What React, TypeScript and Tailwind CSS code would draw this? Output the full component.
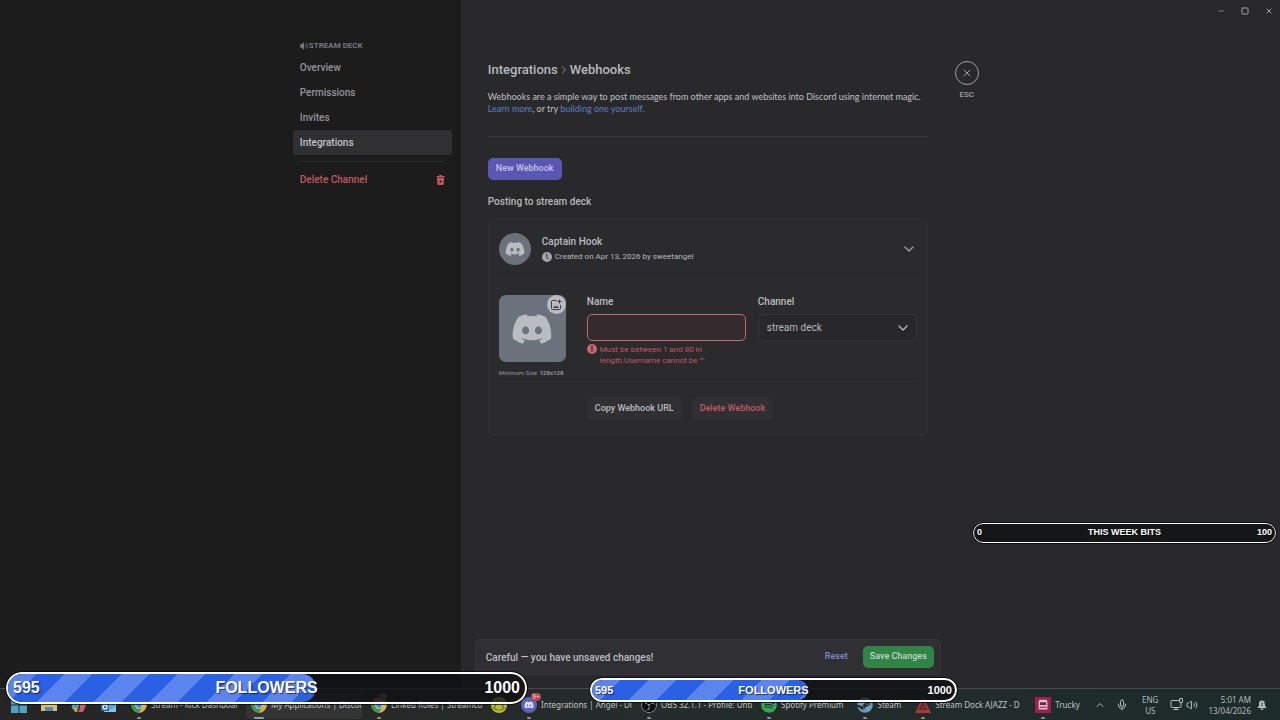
import type { ReactNode } from 'react'
import { ChevronDown, ChevronRight, ChevronUp, Mic, Minus, Monitor, Square, Volume2, X } from 'lucide-react'
import { FaDiscord, FaSnapchat, FaSpotify, FaSteam } from 'react-icons/fa6'
import { SiObsstudio } from 'react-icons/si'
import clsx from 'clsx'

const navItems = ['Overview', 'Permissions', 'Invites', 'Integrations']

function SpeakerIcon() {
    return (
        <svg viewBox="0 0 24 24" className="h-2 w-2" fill="currentColor" aria-hidden="true">
            <path d="M12 2.5v19c0 .8-.9 1.200-1.500.7L4.500 17H2a1.500 1.500 0 0 1-1.500-1.500v-7A1.500 1.500 0 0 1 2 7h2.500l6-5.200c.6-.5 1.500-.1 1.500.7z" />
            <path d="M15 7.500c3 1.500 3 7.500 0 9M18 3c6 3.500 6 14.500 0 18" fill="none" stroke="currentColor" strokeWidth="2.500" />
        </svg>
    )
}

function TrashIcon() {
    return (
        <svg viewBox="0 0 24 28" className="h-[10px] w-[9px]" fill="currentColor" aria-hidden="true">
            <path d="M8 0h8v3h7a1 1 0 0 1 1 1v2H0V4a1 1 0 0 1 1-1h7z" />
            <path
                fillRule="evenodd"
                d="M2 8h20l-1.200 17a3 3 0 0 1-3 3H6.200a3 3 0 0 1-3-3zM12 13l-1 3-3 2 3 2 1 3 1-3 3-2-3-2z"
            />
        </svg>
    )
}

function ClockIcon() {
    return (
        <svg viewBox="0 0 20 20" className="h-[10px] w-[10px] shrink-0" aria-hidden="true">
            <circle cx="10" cy="10" r="10" fill="#a6a6aa" />
            <path d="M9.500 4v6.500l3.500 3.500" fill="none" stroke="#2b2b2e" strokeWidth="2" strokeLinecap="round" />
        </svg>
    )
}

function ErrorIcon() {
    return (
        <svg viewBox="0 0 20 20" className="h-[10px] w-[10px] shrink-0" aria-hidden="true">
            <circle cx="10" cy="10" r="10" fill="#c9656e" />
            <path d="M10 4.500v7" stroke="#2b2b2e" strokeWidth="2.500" strokeLinecap="round" />
            <circle cx="10" cy="15" r="1.500" fill="#2b2b2e" />
        </svg>
    )
}

function UploadIcon() {
    return (
        <svg viewBox="0 0 24 24" className="h-3 w-3" fill="none" stroke="#3c3d42" strokeWidth="2" aria-hidden="true">
            <path d="M13 3H5a2 2 0 0 0-2 2v14a2 2 0 0 0 2 2h14a2 2 0 0 0 2-2v-7M19 1v8M15 5h8" />
            <path d="M6 18l3.500-5 2.500 3 2-2.500 4 4.500z" fill="#3c3d42" stroke="none" />
        </svg>
    )
}

function ChromeIcon() {
    return (
        <svg viewBox="0 0 48 48" className="h-4 w-4" aria-hidden="true">
            <circle cx="24" cy="24" r="23" fill="#c94f45" />
            <path d="M4.100 12.500A23 23 0 0 0 24 47l10-17.500-10-5.500z" fill="#3c9a56" />
            <path d="M24 47a23 23 0 0 0 19.900-34.500H24L34 30z" fill="#d9b23c" />
            <circle cx="24" cy="24" r="11" fill="#d5d8dc" />
            <circle cx="24" cy="24" r="8.500" fill="#4a84d0" />
        </svg>
    )
}

function WindowsIcon() {
    return (
        <svg viewBox="0 0 16 16" className="h-4 w-4" fill="#4fa3c4" aria-hidden="true">
            <path d="M0 0h7.500v7.500H0zM8.500 0H16v7.500H8.500zM0 8.500h7.500V16H0zM8.500 8.500H16V16H8.500z" />
        </svg>
    )
}

function FolderIcon() {
    return (
        <svg viewBox="0 0 16 16" className="h-4 w-4" aria-hidden="true">
            <path d="M0 2h6l2 2h8v10H0z" fill="#d0a545" />
            <path d="M0 6h16v8H0z" fill="#d9bd62" />
            <path d="M4 10h8v4H4z" fill="#4889b8" />
        </svg>
    )
}

function CopilotIcon() {
    return (
        <svg viewBox="0 0 16 16" className="h-4 w-4" aria-hidden="true">
            <path d="M5 1h5l-3 11H2Q0 12 1 8l2-5q.5-2 2-2z" fill="#4c9fb3" />
            <path d="M10 1q1.500 0 2 3h2q2 0 1 4l-2 5q-.5 2-2 2H6q2 0 2.500-3z" fill="#c9606c" />
            <path d="M2 11h5l-1 4H5q-2 0-3-4z" fill="#d3a03f" />
        </svg>
    )
}

function OutlookIcon() {
    return (
        <svg viewBox="0 0 16 16" className="h-4 w-4" aria-hidden="true">
            <path d="M3 1h12v14H3z" fill="#5fa5d6" />
            <path d="M3 9l6 4 6-4v6H3z" fill="#86bfe2" />
            <path d="M0 6h8v8H0z" fill="#2b6ba8" />
            <circle cx="4" cy="10" r="2" fill="none" stroke="#d9e4ec" strokeWidth="1.500" />
        </svg>
    )
}

function StreamDockIcon() {
    return (
        <svg viewBox="0 0 18 18" className="h-4 w-4" aria-hidden="true">
            <path d="M9 0l9 18H0z" fill="#b2343b" />
            <path d="M9 6l4 8H5zM9 9v5" fill="none" stroke="#4c2a2e" strokeWidth="1.500" />
        </svg>
    )
}

function TruckyIcon() {
    return (
        <svg viewBox="0 0 18 18" className="h-4 w-4" aria-hidden="true">
            <path d="M0 0h18v18H0z" fill="#a01f50" />
            <path d="M5 3h8l1 3v8H4V6z" fill="#d9c3cd" />
            <path d="M5.500 6h7v3h-7zM5 11h8v1H5z" fill="#7b2244" />
        </svg>
    )
}

function NetworkIcon() {
    return (
        <div className="relative">
            <Monitor className="h-3 w-3" strokeWidth={2} />
            <span className="absolute -right-px -top-px h-[5px] w-1 rounded-[1px] border border-[#b4bcbc] bg-[#202b2b]" />
        </div>
    )
}

function BellIcon() {
    return (
        <svg viewBox="0 0 20 20" className="h-[10px] w-[10px]" aria-hidden="true">
            <path d="M10 1a6 6 0 0 0-6 6v5l-3 3v1h18v-1l-3-3V7a6 6 0 0 0-6-6zM7 17a3 3 0 0 0 6 0z" fill="#b9c0c0" />
            <path d="M8 6h4l-4 5h4M14 2h4l-4 4h4" fill="none" stroke="#3a4545" strokeWidth="1.500" />
        </svg>
    )
}

interface TaskbarAppProps {
    icon: ReactNode
    label?: string
    title: string
    wide?: boolean
    active?: boolean
    running?: boolean
}

function TaskbarApp({ icon, label, title, wide, active, running }: TaskbarAppProps) {
    return (
        <button
            aria-label={title}
            className={clsx(
                'relative flex h-7 shrink-0 items-center gap-1 rounded px-[5px]',
                wide && 'w-[116px]',
                active && 'bg-[#343434]'
            )}
        >
            <span className="shrink-0">{icon}</span>
            {label && <span className="whitespace-nowrap text-[#c2c4c4]">{label}</span>}
            {running && (
                <span
                    className={clsx(
                        'absolute bottom-0 h-[2px] rounded-full',
                        active ? 'left-2 w-[10px] bg-[#7fa3b8]' : 'left-[11px] w-1 bg-[#8b9090]'
                    )}
                />
            )}
        </button>
    )
}

function Taskbar() {
    return (
        <footer className="flex h-8 items-center border-t border-[#454a4a] bg-linear-to-r from-[#262424] via-[#252c2b] to-[#1d2b2b] pl-[6px] pr-[13px] font-['Noto_Sans',sans-serif] text-[8px] leading-[11px]">
            <div className="flex min-w-0 flex-1 items-center gap-1">
                <TaskbarApp title="Start" icon={<WindowsIcon />} />
                <TaskbarApp title="File Explorer" icon={<FolderIcon />} />
                <TaskbarApp title="Copilot" icon={<CopilotIcon />} />
                <TaskbarApp title="Outlook" icon={<OutlookIcon />} />
                <TaskbarApp title="Kick" icon={<ChromeIcon />} label="Stream - Kick Dashboar" wide running />
                <TaskbarApp title="Discord developers" icon={<ChromeIcon />} label="My Applications | Discor" wide active running />
                <TaskbarApp
                    title="Linked roles"
                    icon={
                        <span className="relative block">
                            <ChromeIcon />
                            <span className="absolute -top-1 right-0 h-2 w-2 rounded-full bg-[#6b645c]" />
                        </span>
                    }
                    label="Linked Roles | Streamco"
                    wide
                    running
                />
                <TaskbarApp
                    title="Snapchat"
                    icon={
                        <span className="flex h-4 w-4 items-center justify-center rounded-full bg-[#b9bc3a]">
                            <FaSnapchat className="h-3 w-3 text-[#3a3b20]" />
                        </span>
                    }
                />
                <TaskbarApp
                    title="Discord"
                    icon={
                        <span className="relative flex h-4 w-4 items-center justify-center rounded-full bg-[#5a62bd]">
                            <FaDiscord className="h-[10px] w-[10px] text-[#dcdef0]" />
                            <span className="absolute -right-1 -top-1 rounded-full bg-[#b8434c] px-px text-[7px] leading-2 text-[#e6d5d6]">
                                9+
                            </span>
                        </span>
                    }
                    label="Integrations | Angel - Di"
                    wide
                    running
                />
                <TaskbarApp
                    title="OBS Studio"
                    icon={<SiObsstudio className="h-4 w-4 rounded-full bg-[#0f1011] text-[#b9bcbc]" />}
                    label="OBS 32.1.1 - Profile: Unti"
                    wide
                    running
                />
                <TaskbarApp title="Spotify" icon={<FaSpotify className="h-4 w-4 text-[#35a85a]" />} label="Spotify Premium" running />
                <TaskbarApp title="Steam" icon={<FaSteam className="h-4 w-4 text-[#6f9dbc]" />} label="Steam" running />
                <TaskbarApp title="Stream Dock" icon={<StreamDockIcon />} label="Stream Dock AJAZZ - D" wide running />
                <TaskbarApp title="Trucky" icon={<TruckyIcon />} label="Trucky" running />
            </div>
            <div className="flex shrink-0 items-center text-[#b4bcbc]">
                <ChevronUp className="h-3 w-3" />
                <Mic className="ml-[10px] h-3 w-3" />
                <div className="ml-[14px] text-center">
                    ENG
                    <br />
                    US
                </div>
                <div className="ml-3 flex items-center gap-1">
                    <NetworkIcon />
                    <Volume2 className="h-3 w-3" />
                </div>
                <div className="ml-[10px] text-right">
                    5:01 AM
                    <br />
                    13/04/2026
                </div>
                <div className="ml-[6px]">
                    <BellIcon />
                </div>
            </div>
        </footer>
    )
}

interface GoalBarProps {
    label: string
    value: number
    goal: number
    size: 'sm' | 'md' | 'lg'
    className: string
}

function GoalBar({ label, value, goal, size, className }: GoalBarProps) {
    return (
        <div
            className={clsx(
                "absolute overflow-hidden rounded-full border-white bg-[#0e0f10]/75 font-['Liberation_Sans',sans-serif] font-bold text-white outline outline-black/70",
                size === 'lg' && 'h-8 border-2 text-[16px]',
                size === 'md' && 'h-6 border-2 text-[11px]',
                size === 'sm' && 'h-5 border text-[9px]',
                className
            )}
        >
            <div
                className="h-full rounded-full bg-[repeating-linear-gradient(135deg,#5b84ee_0px,#5b84ee_20px,#2a60e4_20px,#2a60e4_40px)]"
                style={{ width: `${(value / goal) * 100}%` }}
            />
            <div
                className={clsx(
                    'absolute inset-0 grid grid-cols-[1fr_auto_1fr] items-center text-shadow-[1px_1px_1px_rgb(0_0_0/0.6)]',
                    size === 'lg' ? 'px-[5px]' : 'px-[3px]'
                )}
            >
                <span>{value}</span>
                <span>{label}</span>
                <span className="text-right">{goal}</span>
            </div>
        </div>
    )
}

function Sidebar() {
    return (
        <aside className="flex w-[36%] shrink-0 justify-end bg-[#1c1c1c] pr-[9px] pt-10 text-[10px] text-[#94949a]">
            <nav className="w-[159px]">
                <h2 className="mb-1 flex h-[11px] items-center gap-px px-[7px] text-[8px] font-bold text-[#77777c]">
                    <SpeakerIcon />
                    STREAM DECK
                </h2>
                {navItems.map((item) => (
                    <a
                        key={item}
                        href="#"
                        className={clsx(
                            'flex h-[25px] items-center rounded-[3px] px-[7px] font-medium',
                            item === 'Integrations' && 'bg-[#303033] text-[#c4c4c8]'
                        )}
                    >
                        {item}
                    </a>
                ))}
                <hr className="mx-[7px] mb-[5px] mt-[6px] border-[#29292b]" />
                <button className="flex h-[25px] w-full items-center justify-between px-[7px] font-medium text-[#c25762]">
                    Delete Channel
                    <TrashIcon />
                </button>
            </nav>
        </aside>
    )
}

function WebhookCard() {
    return (
        <section className="mt-[9px] rounded-[5px] border border-[#323236] bg-[#2b2b2e] px-[10px] pb-[14px] pt-[13px]">
            <div className="flex items-center">
                <span className="flex h-8 w-8 items-center justify-center rounded-full bg-[#6c727c]">
                    <FaDiscord className="h-5 w-5 text-[#b9bcc1]" />
                </span>
                <div className="ml-[11px] flex-1">
                    <h3 className="text-[10px] font-medium leading-4 text-[#bcbcc0]">Captain Hook</h3>
                    <p className="flex items-center gap-[3px] text-[8px] leading-[14px] text-[#b8b8bc]">
                        <ClockIcon />
                        Created on Apr 13, 2026 by sweetangel
                    </p>
                </div>
                <button aria-label="Collapse webhook">
                    <ChevronDown className="h-4 w-4 text-[#9c9ca1]" />
                </button>
            </div>

            <hr className="mb-4 mt-[13px] border-[#2f2f32]" />

            <div className="flex">
                <div className="w-[67px] shrink-0">
                    <button
                        aria-label="Change avatar"
                        className="relative flex h-[67px] w-full items-center justify-center rounded-[7px] bg-[#6c727c]"
                    >
                        <FaDiscord className="h-[42px] w-[42px] text-[#b9bcc1]" />
                        <span className="absolute right-0 top-0 flex h-[19px] w-[19px] items-center justify-center rounded-full bg-[#b9bbbf]">
                            <UploadIcon />
                        </span>
                    </button>
                    <p className="mt-[6px] whitespace-nowrap text-[6px] leading-[10px] text-[#94949a]">
                        Minimum Size: <strong className="font-bold">128x128</strong>
                    </p>
                </div>
                <div className="ml-[21px] grid min-w-0 flex-1 grid-cols-2 items-start gap-x-3">
                    <div>
                        <label htmlFor="hook-name" className="block text-[10px] font-medium leading-[14px] text-[#bcbcc0]">
                            Name
                        </label>
                        <input
                            id="hook-name"
                            type="text"
                            aria-invalid="true"
                            className="mt-[5px] block h-[27px] w-full rounded-[5px] border border-[#c26a72] bg-[#332a2e] px-2 text-[10px] text-[#bcbcc0] outline-none"
                        />
                        <p className="mt-[3px] flex gap-[3px] text-[8px] leading-[11px] text-[#c25762]">
                            <ErrorIcon />
                            <span>
                                Must be between 1 and 80 in
                                <br />
                                length.Username cannot be ""
                            </span>
                        </p>
                    </div>
                    <div>
                        <label htmlFor="hook-channel" className="block text-[10px] font-medium leading-[14px] text-[#bcbcc0]">
                            Channel
                        </label>
                        <div className="relative mt-[5px]">
                            <select
                                id="hook-channel"
                                className="block h-[27px] w-full appearance-none rounded-[5px] border border-[#36363a] bg-[#28282a] px-2 text-[10px] text-[#b8b8bc] outline-none"
                            >
                                <option>stream deck</option>
                            </select>
                            <ChevronDown className="pointer-events-none absolute right-[6px] top-[6px] h-4 w-4 text-[#b8b8bc]" />
                        </div>
                    </div>
                </div>
            </div>

            <hr className="mb-[15px] mt-[3px] border-[#2f2f32]" />

            <div className="ml-[88px] flex gap-[10px] text-[9px] font-medium">
                <button className="h-[23px] rounded-[5px] bg-[#303033] px-2 text-[#bcbcc0]">Copy Webhook URL</button>
                <button className="h-[23px] rounded-[5px] bg-[#303033] px-2 text-[#c25762]">Delete Webhook</button>
            </div>
        </section>
    )
}

function UnsavedBar() {
    return (
        <div className="mt-auto flex h-9 items-center rounded-[5px] border border-[#353539] bg-[#303034] pl-[10px] pr-[6px] font-medium">
            <p className="flex-1 text-[10px] text-[#bcbcc0]">Careful — you have unsaved changes!</p>
            <button className="mr-[15px] text-[9px] text-[#7f89cf]">Reset</button>
            <button className="h-[22px] rounded-[5px] bg-[#2f8446] px-[7px] text-[9px] text-[#c4d6c8]">Save Changes</button>
        </div>
    )
}

export default function App() {
    return (
        <div className="relative flex min-h-screen flex-col overflow-hidden bg-[#29292b] font-[Roboto,sans-serif]">
            <div className="flex flex-1">
                <Sidebar />
                <main className="flex min-w-0 flex-1 flex-col pb-[13px] pl-[14px]">
                    <div className="flex h-[22px] items-center justify-end gap-4 pr-[7px] text-[#a0a0a4]">
                        <button aria-label="Minimize">
                            <Minus className="h-2 w-2" />
                        </button>
                        <button aria-label="Maximize">
                            <Square className="h-2 w-2" strokeWidth={3} />
                        </button>
                        <button aria-label="Close window">
                            <X className="h-2 w-2" strokeWidth={3} />
                        </button>
                    </div>
                    <div className="flex flex-1 gap-[14px]">
                        <div className="flex w-[466px] flex-col pt-10">
                            <div className="px-[13px]">
                                <h1 className="flex items-center text-[13px] font-medium leading-4 text-[#b8b8bc]">
                                    Integrations
                                    <ChevronRight className="h-3 w-3 text-[#8d8d92]" />
                                    Webhooks
                                </h1>
                                <p className="mt-[13px] font-[Lato,sans-serif] text-[9px] leading-3 text-[#c0c0c4]">
                                    Webhooks are a simple way to post messages from other apps and websites into Discord using
                                    internet magic.
                                    <br />
                                    <a href="#" className="text-[#5a7fc4]">
                                        Learn more
                                    </a>
                                    , or try{' '}
                                    <a href="#" className="text-[#5a7fc4]">
                                        building one yourself.
                                    </a>
                                </p>
                                <hr className="mt-[21px] border-[#37373b]" />
                                <button className="mt-[21px] h-[22px] rounded-[5px] bg-[#5a57b4] px-2 text-[9px] font-medium text-[#c3c2e2]">
                                    New Webhook
                                </button>
                                <h2 className="mt-[14px] text-[10px] font-medium leading-4 text-[#b8b8bc]">
                                    Posting to stream deck
                                </h2>
                                <WebhookCard />
                            </div>
                            <UnsavedBar />
                        </div>
                        <div className="pt-[39px] text-center text-[#a0a0a4]">
                            <button
                                aria-label="Close settings"
                                className="flex h-6 w-6 items-center justify-center rounded-full border border-[#a0a0a4]"
                            >
                                <X className="h-3 w-3" />
                            </button>
                            <p className="mt-1 text-[8px] font-medium leading-3">ESC</p>
                        </div>
                    </div>
                </main>
            </div>
            <Taskbar />

            <GoalBar label="THIS WEEK BITS" value={0} goal={100} size="sm" className="bottom-[177px] right-1 w-[303px]" />
            <GoalBar label="FOLLOWERS" value={595} goal={1000} size="lg" className="bottom-4 left-[6px] w-[521px]" />
            <GoalBar label="FOLLOWERS" value={595} goal={1000} size="md" className="bottom-[18px] left-[590px] w-[367px]" />
        </div>
    )
}
